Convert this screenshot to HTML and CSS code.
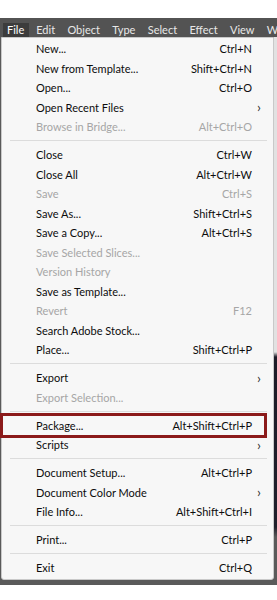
FILE: index.html
```html
<!DOCTYPE html>
<html>
<head>
<meta charset="utf-8">
<link rel="stylesheet" href="styles.css">
</head>
<body>
<div class="top"></div>
<div class="app">
  <div class="menubar">
    <span class="mb active">File</span>
    <span class="mb">Edit</span>
    <span class="mb">Object</span>
    <span class="mb">Type</span>
    <span class="mb">Select</span>
    <span class="mb">Effect</span>
    <span class="mb">View</span>
    <span class="mb">Window</span>
  </div>
  <div class="body">
    <div class="panel">
      <div class="item"><span class="label">New...</span><span class="key">Ctrl+N</span></div>
      <div class="item"><span class="label">New from Template...</span><span class="key">Shift+Ctrl+N</span></div>
      <div class="item"><span class="label">Open...</span><span class="key">Ctrl+O</span></div>
      <div class="item sub"><span class="label">Open Recent Files</span><span class="arrow">›</span></div>
      <div class="item dis"><span class="label">Browse in Bridge...</span><span class="key">Alt+Ctrl+O</span></div>
      <div class="sep"></div>
      <div class="item"><span class="label">Close</span><span class="key">Ctrl+W</span></div>
      <div class="item"><span class="label">Close All</span><span class="key">Alt+Ctrl+W</span></div>
      <div class="item dis"><span class="label">Save</span><span class="key">Ctrl+S</span></div>
      <div class="item"><span class="label">Save As...</span><span class="key">Shift+Ctrl+S</span></div>
      <div class="item"><span class="label">Save a Copy...</span><span class="key">Alt+Ctrl+S</span></div>
      <div class="item dis"><span class="label">Save Selected Slices...</span></div>
      <div class="item dis"><span class="label">Version History</span></div>
      <div class="item"><span class="label">Save as Template...</span></div>
      <div class="item dis"><span class="label">Revert</span><span class="key">F12</span></div>
      <div class="item"><span class="label">Search Adobe Stock...</span></div>
      <div class="item"><span class="label">Place...</span><span class="key">Shift+Ctrl+P</span></div>
      <div class="sep"></div>
      <div class="item sub"><span class="label">Export</span><span class="arrow">›</span></div>
      <div class="item dis"><span class="label">Export Selection...</span></div>
      <div class="sep"></div>
      <div class="item hl"><span class="label">Package...</span><span class="key">Alt+Shift+Ctrl+P</span></div>
      <div class="item sub"><span class="label">Scripts</span><span class="arrow">›</span></div>
      <div class="sep"></div>
      <div class="item"><span class="label">Document Setup...</span><span class="key">Alt+Ctrl+P</span></div>
      <div class="item sub"><span class="label">Document Color Mode</span><span class="arrow">›</span></div>
      <div class="item"><span class="label">File Info...</span><span class="key">Alt+Shift+Ctrl+I</span></div>
      <div class="sep"></div>
      <div class="item"><span class="label">Print...</span><span class="key">Ctrl+P</span></div>
      <div class="sep"></div>
      <div class="item"><span class="label">Exit</span><span class="key">Ctrl+Q</span></div>
    </div>
    <div class="edge"></div>
  </div>
</div>
</body>
</html>
```
FILE: styles.css
```css
* { box-sizing: border-box; }
html, body { margin: 0; padding: 0; background: #ffffff; }
body {
  width: 277px;
  height: 600px;
  overflow: hidden;
  font-family: "Lato", "Noto Sans", sans-serif;
  font-size: 11px;
}
.top { height: 18px; background: #ffffff; }
.app {
  background: #5a5a5a;
  padding-bottom: 5px;
}
.menubar {
  height: 19px;
  display: flex;
  align-items: flex-end;
  white-space: nowrap;
  overflow: hidden;
  background: #535353;
  padding-left: 3px;
}
.mb {
  color: #e8e8e8;
  height: 14px;
  line-height: 13px;
  padding: 0 4px;
  margin-right: 4.3px;
  font-size: 11px;
  flex: none;
}
.mb.active { background: #3c3c3c; color: #ffffff; padding-right: 5px; margin-right: 3px; }
.body { display: flex; }
.panel {
  width: 273px;
  margin-left: 1px;
  background: #f7f7f7;
  border: 1px solid #c9c9c9;
  border-radius: 0 0 3px 3px;
  padding: 1px 0 1px;
}
.edge {
  flex: 1;
  background: linear-gradient(to bottom, #e2e2e2 0, #e2e2e2 315px, #1c1c28 320px, #20202c 490px, #5a5a5a 500px);
}
.item {
  height: 19.5px;
  display: flex;
  align-items: center;
  padding-left: 34px;
  padding-right: 21px;
  color: #0d0d0d;
  position: relative;
  white-space: nowrap;
}
.item .label { flex: 1; }
.item .key { text-align: right; }
.item.dis { color: #a6a6a6; }
.item.sub { padding-right: 12px; }
.arrow { font-size: 14px; line-height: 12px; color: #333; }
.sep {
  height: 1px;
  background: #dcdcdc;
  margin: 3.5px 6px 4px 8px;
}
.item.hl::after {
  content: "";
  position: absolute;
  left: -2px;
  right: 6px;
  top: -2.5px;
  bottom: -2.5px;
  border: 3px solid #8b1a1a;
}
```
